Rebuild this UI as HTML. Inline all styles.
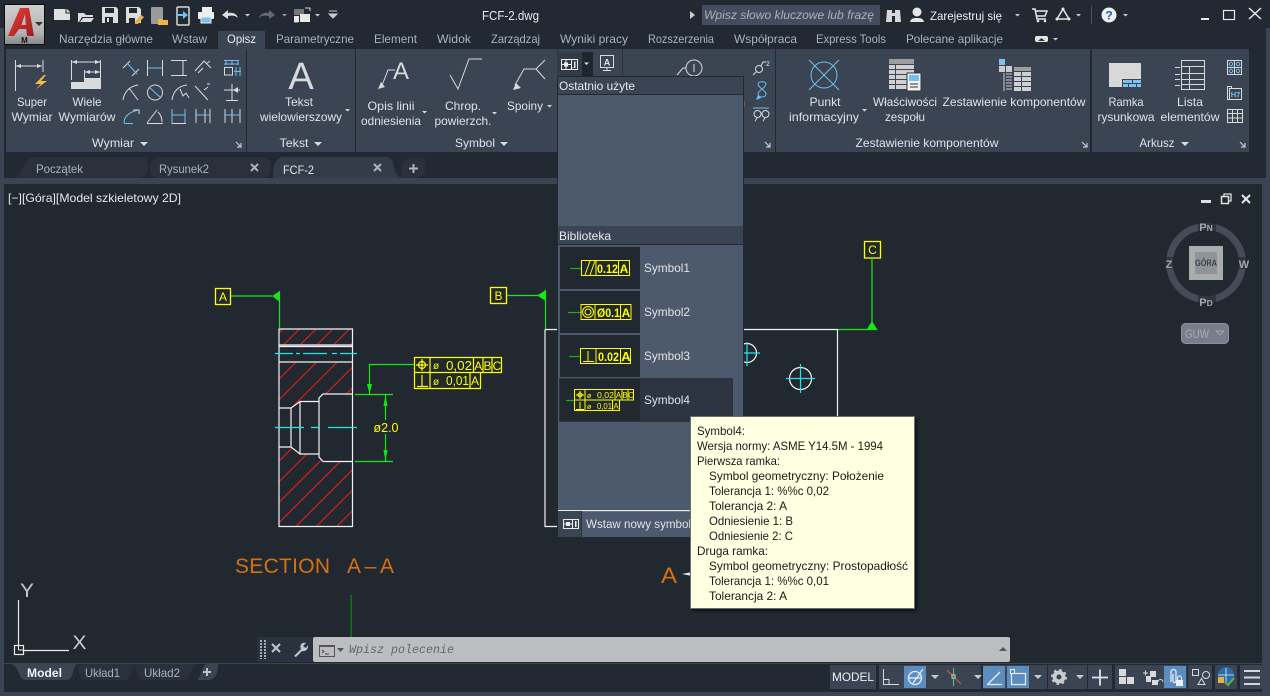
<!DOCTYPE html>
<html lang="pl"><head><meta charset="utf-8"><title>FCF-2.dwg</title>
<style>
html,body{margin:0;padding:0;background:#222933;width:1270px;height:696px;overflow:hidden}
svg{display:block;position:absolute;left:0;top:0}
text{font-family:"Liberation Sans","DejaVu Sans",sans-serif;font-size:12px;fill:#dfe3e8}
.m{text-anchor:middle}
.tab{fill:#a9b2be}
.g{fill:none;stroke:#d8dadc;stroke-width:1}
.b{fill:none;stroke:#6fc0f0;stroke-width:1}
.w{fill:none;stroke:#f4f4f4;stroke-width:1.2}
.gr{fill:none;stroke:#19e619;stroke-width:1.2}
.y{fill:none;stroke:#ffff00;stroke-width:1.2}
.c{fill:none;stroke:#27e3e8;stroke-width:1.2}
.tt{fill:#1a1a1a}
.yt{fill:#ffff00}
.sb{fill:#e4e6e8}
</style></head><body>
<svg width="1270" height="696" viewBox="0 0 1270 696" xmlns="http://www.w3.org/2000/svg">
<defs>
<linearGradient id="lg" x1="0" y1="0" x2="0" y2="1"><stop offset="0" stop-color="#cfcfcf"/><stop offset=".7" stop-color="#b4b4b4"/><stop offset="1" stop-color="#868686"/></linearGradient>
<linearGradient id="ag" x1="0" y1="0" x2="1" y2="1"><stop offset="0" stop-color="#e8403c"/><stop offset="1" stop-color="#9c1c1c"/></linearGradient>
<pattern id="h1" width="14.5" height="14.5" patternUnits="userSpaceOnUse" patternTransform="translate(0.6 0) rotate(45)"><line x1="1" y1="0" x2="1" y2="14.5" stroke="#ee1c1c" stroke-width="1"/></pattern>
<pattern id="h2" width="11.8" height="11.8" patternUnits="userSpaceOnUse" patternTransform="translate(9.6 0) rotate(45)"><line x1="1" y1="0" x2="1" y2="11.8" stroke="#ee1c1c" stroke-width="1"/></pattern>
<filter id="sh" x="-5%" y="-5%" width="112%" height="112%"><feDropShadow dx="2" dy="2" stdDeviation="1.5" flood-color="#000" flood-opacity=".55"/></filter>
</defs>

<!-- base -->
<rect width="1270" height="696" fill="#222933"/>
<rect x="0" y="28" width="4" height="668" fill="#3b4453"/>
<rect x="1266" y="28" width="4" height="668" fill="#3b4453"/>
<rect x="0" y="178" width="1270" height="6" fill="#3b4453"/>
<rect x="1262" y="178" width="8" height="518" fill="#3b4453"/>
<rect x="0" y="692" width="1270" height="4" fill="#3b4453"/>
<rect x="4" y="184" width="1258" height="479" fill="#212830"/>
<rect x="4" y="663" width="1258" height="1" fill="#3b4453"/>

<!-- logo -->
<rect x="4.500" y="4.500" width="40" height="40" fill="url(#lg)" stroke="#0c0c0c"/>
<path d="M8 36 L20 8 L29 8 L34 36 L27 36 L26.200 29 L19 29 L14 36 Z M21.500 25 L25.800 25 L25 14 Z" fill="url(#ag)" fill-rule="evenodd"/>
<path d="M35 22 h8 l-4 4 z" fill="#333"/>
<text x="24.500" y="43" class="m" style="font-size:8px;font-weight:bold;fill:#111">M</text>

<!-- QAT -->
<path d="M54 9 h13 l3 3 v8 h-16 z" fill="#e0e0e0"/><path d="M66 9 v4 h4" fill="none" stroke="#222" />
<path d="M78 13 h6 l2 2 h7 v2 h-11 l-3 5 h-1 z M83 18 h11 l-3 4 h-11 z" fill="#dcdcdc"/>
<path d="M102 7 h14 l2 2 v14 h-16 z" fill="#dcdcdc"/><rect x="105" y="8" width="9" height="5" fill="#222933"/><rect x="105" y="17" width="8" height="6" fill="#222933"/><rect x="107" y="18" width="2" height="4" fill="#ddd"/>
<path d="M126 7 h13 l2 2 v14 h-15 z" fill="#dcdcdc"/><rect x="129" y="8" width="8" height="5" fill="#222933"/><rect x="129" y="18" width="6" height="5" fill="#222933"/><path d="M135 22 l6 -7 l3 2 l-6 7 h-3 z" fill="#e7b04a"/>
<rect x="151" y="7" width="12" height="17" rx="1" fill="#9a9a9a"/><path d="M158 19 h4 l1 1 h5 v5 h-10 z" fill="#eeb73e"/>
<rect x="177" y="7" width="12" height="18" rx="1" fill="none" stroke="#d8d8d8" stroke-width="1.500"/><path d="M176 14 h7 v-3 l5 4 l-5 4 v-3 h-7 z" fill="#6fc0f0"/>
<path d="M202 7 h10 v5 h-10 z" fill="#eee"/><rect x="198" y="12" width="16" height="7" rx="1" fill="#eee"/><rect x="201" y="17" width="10" height="6" fill="#7cc0ef" stroke="#eee"/>
<path d="M222 15 l6 -5 v3 c5 -1 9 1 10 5 c-2 -2 -5 -3 -10 -2 v3 z" fill="#dcdcdc"/><path d="M245 14 h5 l-2.500 2.500 z" fill="#ccc"/>
<path d="M275 15 l-6 -5 v3 c-5 -1 -9 1 -10 5 c2 -2 5 -3 10 -2 v3 z" fill="#636a75"/><path d="M282 14 h5 l-2.500 2.500 z" fill="#999"/>
<rect x="294" y="9" width="10" height="6" fill="#777"/><rect x="300" y="14" width="10" height="8" fill="#e8e8e8"/><rect x="294" y="16" width="5" height="6" fill="#e8e8e8"/><path d="M305 8 h5 v3" class="g"/><path d="M294 22 h4" class="g"/>
<path d="M315 14 h5 l-2.500 2.500 z" fill="#ccc"/>
<path d="M329 11 h8 M329 14 h8 l-4 4 z" stroke="#ccc" fill="#ccc"/>

<text x="482" y="20" textLength="57" lengthAdjust="spacingAndGlyphs" style="font-size:13px;fill:#e8eaed">FCF-2.dwg</text>
<path d="M690 11 l5 4 l-5 4 z" fill="#ccc"/>
<rect x="702" y="5" width="178" height="20" fill="#444d5d"/>
<text x="704" y="19" textLength="170" lengthAdjust="spacingAndGlyphs" style="font-style:italic;fill:#aab0b8">Wpisz słowo kluczowe lub frazę</text>
<path d="M887 10 h5 v12 h-6 z M895 10 h5 l1 12 h-6 z" fill="#d8d8d8"/><rect x="892" y="13" width="3" height="3" fill="#d8d8d8"/>
<circle cx="917" cy="12" r="4.500" fill="#e5e5e5"/><path d="M910 22 c1 -4 4 -4 7 -4 s6 0 7 4 z" fill="#e5e5e5"/>
<text x="930" y="20" textLength="72" lengthAdjust="spacingAndGlyphs" style="fill:#eef0f2">Zarejestruj się</text>
<path d="M1015 14 h5 l-2.500 2.500 z" fill="#ccc"/>
<path d="M1032 9 h3 l2 10 h9 M1036 11 h11 l-2 5 h-8" fill="none" stroke="#e8e8e8" stroke-width="1.500"/><circle cx="1038" cy="21" r="1.300" fill="#e8e8e8"/><circle cx="1045" cy="21" r="1.300" fill="#e8e8e8"/>
<path d="M1063 9 l-6 10 h12 z" fill="none" stroke="#e8e8e8" stroke-width="1.500"/><circle cx="1063" cy="9" r="1.500" fill="#e8e8e8"/><circle cx="1057" cy="19" r="1.500" fill="#e8e8e8"/><circle cx="1069" cy="19" r="1.500" fill="#e8e8e8"/>
<path d="M1076 14 h5 l-2.500 2.500 z" fill="#ccc"/>
<rect x="1091" y="6" width="1" height="18" fill="#4a5260"/>
<circle cx="1109" cy="15" r="7.500" fill="#eef0f2"/><text x="1109" y="19.500" class="m" style="font-weight:bold;font-size:12px;fill:#1f5fb0">?</text>
<path d="M1123 14 h5 l-2.500 2.500 z" fill="#ccc"/>
<rect x="1201" y="18" width="8" height="2" fill="#e8e8e8"/>
<rect x="1223.500" y="10.500" width="11" height="9" fill="none" stroke="#e8e8e8" stroke-width="1.200"/>
<path d="M1249 8 L1261 19 M1261 8 L1249 19" stroke="#e8e8e8" stroke-width="1.500"/>

<!-- ribbon tabs -->
<rect x="218" y="31" width="47" height="18" fill="#3b4453"/>
<text x="59" y="43" class="tab" textLength="94" lengthAdjust="spacingAndGlyphs">Narzędzia główne</text>
<text x="172" y="43" class="tab" textLength="35" lengthAdjust="spacingAndGlyphs">Wstaw</text>
<text x="227" y="43" textLength="29" lengthAdjust="spacingAndGlyphs" style="fill:#e8eaed">Opisz</text>
<text x="276" y="43" class="tab" textLength="78" lengthAdjust="spacingAndGlyphs">Parametryczne</text>
<text x="374" y="43" class="tab" textLength="43" lengthAdjust="spacingAndGlyphs">Element</text>
<text x="437" y="43" class="tab" textLength="34" lengthAdjust="spacingAndGlyphs">Widok</text>
<text x="491" y="43" class="tab" textLength="49" lengthAdjust="spacingAndGlyphs">Zarządzaj</text>
<text x="560" y="43" class="tab" textLength="68" lengthAdjust="spacingAndGlyphs">Wyniki pracy</text>
<text x="648" y="43" class="tab" textLength="66" lengthAdjust="spacingAndGlyphs">Rozszerzenia</text>
<text x="734" y="43" class="tab" textLength="63" lengthAdjust="spacingAndGlyphs">Współpraca</text>
<text x="816" y="43" class="tab" textLength="70" lengthAdjust="spacingAndGlyphs">Express Tools</text>
<text x="906" y="43" class="tab" textLength="97" lengthAdjust="spacingAndGlyphs">Polecane aplikacje</text>
<rect x="1035" y="36" width="13" height="6" rx="2" fill="#e4e4e4"/><path d="M1038 41 l3.500 -3 l3.500 3 z" fill="#333"/><path d="M1053 38 h5 l-2.500 2.500 z" fill="#ccc"/>

<!-- ribbon panels -->
<rect x="6" y="49" width="240" height="103" fill="#3b4453"/>
<rect x="247" y="49" width="108" height="103" fill="#3b4453"/>
<rect x="356" y="49" width="419" height="103" fill="#3b4453"/>
<rect x="776" y="49" width="314" height="103" fill="#3b4453"/>
<rect x="1092" y="49" width="157" height="103" fill="#3b4453"/>

<!-- Super Wymiar -->
<path d="M15.500 60 V91 M43 60 V72 M16 66 H42" class="g"/><path d="M16 66 l5 -2 v4 z M42 66 l-5 -2 v4 z" fill="#d8dadc"/>
<path d="M44 75 l-9 9 h6 l-6 6 l12 -9 h-6 l5 -6 z" fill="#f1bd45"/>
<text x="32" y="106" class="m" textLength="30" lengthAdjust="spacingAndGlyphs">Super</text>
<text x="32" y="121" class="m" textLength="41" lengthAdjust="spacingAndGlyphs">Wymiar</text>
<!-- Wiele -->
<path d="M71.500 60 V80 M100.500 60 V80 M84.500 70 V79 M72 62 H100 M85 72 H100" class="g"/><path d="M72 62 l5 -2 v4 z M100 62 l-5 -2 v4 z M85 72 l5 -2 v4 z M100 72 l-5 -2 v4 z" fill="#d8dadc"/>
<path d="M71 82 h13 v-4 h17 v11 h-30 z" fill="#d8dadc"/>
<text x="87" y="106" class="m" textLength="29" lengthAdjust="spacingAndGlyphs">Wiele</text>
<text x="87" y="121" class="m" textLength="57" lengthAdjust="spacingAndGlyphs">Wymiarów</text>
<!-- grid of dims -->
<path d="M123 68 L130 61 M132 76 L139 69" class="g"/><path d="M127 63 L137 74" class="b"/>
<path d="M147.500 60 V76 M162.500 60 V76" class="g"/><path d="M148 68 H162" class="b"/>
<path d="M171 60.500 H187 M171 75.500 H187 M183 61 V75" class="g"/>
<path d="M195 71 L204 61 L211 68 M198 73 L203 68 M206 64 L210 61" class="g"/>
<path d="M123 100 C124 92 130 86 138 85 M129 88 L138 100" class="g"/>
<circle cx="155" cy="92.500" r="7.500" class="g" stroke-width="1.300"/><path d="M150 88 L160 97" class="b"/>
<path d="M172 100 C173 92 178 86 187 85 M180 89 L183 96 L186 93 L189 98" class="g"/>
<path d="M195 86 L208 100 M207 84 h3 M204 90 l4 -3" class="g"/>
<path d="M224 90 H240 M232 84 V100 M226 100.500 H238" class="g"/><path d="M233 90 l5 -3 v6 z" fill="#d8dadc"/>
<path d="M124 123 C124 116 130 112 138 110 M124 123.500 H133" class="b" stroke-width="1.500"/><path d="M133 110 h6 v4" class="g"/>
<path d="M147 123.500 H163 M147 123 L157 110 M158 112 C161 115 162 119 162 122" class="g"/>
<path d="M172 109 V124 M185 109 V124" class="b"/><path d="M172 115 H185" class="b"/><path d="M172 123.500 H186" class="g"/>
<path d="M196 109 V123 M205 109 V123 M210 109 V123" class="g"/><path d="M196 115 H210" class="b"/>
<path d="M225 109 V123 M232 109 V123 M240 109 V123" class="g"/><path d="M225 115 H240" class="b"/>
<path d="M224 60.500 h15 M224 64 h15 M226 60 v5 M232 60 v5 M238 60 v5" class="b"/><rect x="224.500" y="67.500" width="8" height="7.500" class="g"/><path d="M236 67 v9 M240 67 v9 M234 71.500 h7" class="b"/>
<text x="113" y="147" class="m" textLength="42" lengthAdjust="spacingAndGlyphs">Wymiar</text><path d="M140 142 h8 l-4 4 z" fill="#d8dadc"/>
<path d="M236 142 l5 5 M241 143 v4 h-4" stroke="#c6c9cd" fill="none" stroke-width="1.200"/>
<!-- Tekst -->
<text x="301" y="89" class="m" style="font-size:38px;fill:#d9dadb">A</text>
<text x="299" y="106" class="m" textLength="28" lengthAdjust="spacingAndGlyphs">Tekst</text>
<text x="301" y="121" class="m" textLength="82" lengthAdjust="spacingAndGlyphs">wielowierszowy</text>
<path d="M345 109 h5 l-2.500 2.500 z" fill="#d8dadc"/>
<text x="294" y="147" class="m" textLength="29" lengthAdjust="spacingAndGlyphs">Tekst</text><path d="M314 142 h8 l-4 4 z" fill="#d8dadc"/>
<!-- Symbol panel -->
<path d="M381 88 L388 70 H395" class="g"/><path d="M378 89 l7 -2 l-4 -5 z" fill="#d8dadc"/><text x="401" y="79" class="m" style="font-size:24px;fill:#d9dadb">A</text>
<text x="391" y="110" class="m" textLength="47" lengthAdjust="spacingAndGlyphs">Opis linii</text>
<text x="391" y="125" class="m" textLength="60" lengthAdjust="spacingAndGlyphs">odniesienia</text>
<path d="M422 111 h5 l-2.500 2.500 z" fill="#d8dadc"/>
<path d="M450 75 L458 89 L469 59 H482" class="g" stroke-width="1.200"/>
<text x="463" y="110" class="m" textLength="36" lengthAdjust="spacingAndGlyphs">Chrop.</text>
<text x="463" y="125" class="m" textLength="57" lengthAdjust="spacingAndGlyphs">powierzch.</text>
<path d="M492 112 h5 l-2.500 2.500 z" fill="#d8dadc"/>
<path d="M515 85 L524 69 H536 L545 60 M536 69 L545 79" class="g" stroke-width="1.200"/><path d="M513 90 l8 -2 l-5 -5 z" fill="#d8dadc"/>
<text x="525" y="110" class="m" textLength="36" lengthAdjust="spacingAndGlyphs">Spoiny</text>
<path d="M547 105 h5 l-2.500 2.500 z" fill="#d8dadc"/>
<text x="475" y="147" class="m" textLength="40" lengthAdjust="spacingAndGlyphs">Symbol</text><path d="M500 142 h8 l-4 4 z" fill="#d8dadc"/>
<rect x="557" y="49" width="1" height="103" fill="#2c3340"/>
<rect x="622" y="49" width="1" height="28" fill="#2c3340"/>
<!-- flyout top buttons -->
<rect x="557" y="52" width="25" height="24" fill="#333b49"/><rect x="582" y="52" width="11" height="24" fill="#1f2630"/>
<rect x="561.500" y="59.500" width="16" height="10" fill="none" stroke="#eee"/><path d="M571.500 60 v9 M566 60 v9 M562 64.500 h9" stroke="#eee"/><rect x="564" y="62.500" width="4" height="4" fill="#eee"/><rect x="574" y="61.500" width="1.500" height="6.500" fill="#eee"/><rect x="572.500" y="67" width="1" height="1" fill="#eee"/>
<path d="M584 62.500 h5 l-2.500 2.500 z" fill="#ddd"/>
<rect x="600.500" y="55.500" width="13" height="12" fill="none" stroke="#d8dadc"/><text x="607" y="65.500" class="m" style="font-size:9px;font-weight:bold">A</text><path d="M607 68 v2 M603 70.500 h8" class="g"/>
<path d="M677 75 L683 68 H686" class="g"/><circle cx="694" cy="68" r="8" class="g" stroke-width="1.200"/><path d="M694 64 v8" class="g"/>
<path d="M744 101 v6" stroke="#c0673a"/>
<!-- right small icons -->
<circle cx="759" cy="69" r="3.500" class="g"/><path d="M753 75 L757 71 M761 66 L763 62 H766" class="g"/><text x="766" y="66" style="font-size:7px;font-weight:bold;fill:#6fc0f0">2</text>
<path d="M758 84 C758 81 766 81 766 84 C766 88 758 90 758 94 C758 98 766 98 766 94 C766 90 758 88 758 84 Z" class="b" stroke-width="1.300"/><path d="M756 100 l2 -5 l3 3 z" fill="#6fc0f0"/>
<rect x="753" y="107.500" width="16" height="1" fill="#6fc0f0"/><circle cx="757.500" cy="114" r="3.500" class="g"/><circle cx="765.500" cy="114" r="3.500" class="g"/><path d="M757 118 l-2 3 M765 118 l-2 3" class="g"/>
<path d="M765 142 l5 5 M770 143 v4 h-4" stroke="#c6c9cd" fill="none" stroke-width="1.200"/>
<!-- Punkt info -->
<circle cx="824" cy="75" r="13" class="b" stroke-width="1.300"/><path d="M809 60 L839 90 M839 60 L809 90" class="b" stroke-width="1.300"/>
<text x="825" y="106" class="m" textLength="31" lengthAdjust="spacingAndGlyphs">Punkt</text>
<text x="824" y="121" class="m" textLength="70" lengthAdjust="spacingAndGlyphs">informacyjny</text>
<path d="M862 109 h5 l-2.500 2.500 z" fill="#d8dadc"/>
<!-- Wlasciwosci -->
<rect x="889" y="59" width="25" height="5" fill="#9d9d9d"/><g fill="#d0d0d0"><rect x="889" y="65" width="6" height="4"/><rect x="896" y="65" width="18" height="4"/><rect x="889" y="70" width="6" height="4"/><rect x="896" y="70" width="18" height="4"/><rect x="889" y="75" width="6" height="4"/><rect x="896" y="75" width="12" height="4"/><rect x="889" y="80" width="6" height="4"/><rect x="896" y="80" width="12" height="4"/><rect x="889" y="85" width="6" height="4"/><rect x="896" y="85" width="12" height="4"/></g>
<rect x="907" y="73" width="14" height="18" fill="#f1f1f1" stroke="#333"/><rect x="909" y="75" width="10" height="6" fill="#6fc0f0"/><path d="M910 84 h8 M910 87 h8" stroke="#333"/>
<text x="905" y="106" class="m" textLength="64" lengthAdjust="spacingAndGlyphs">Właściwości</text>
<text x="905" y="121" class="m" textLength="40" lengthAdjust="spacingAndGlyphs">zespołu</text>
<rect x="999" y="59" width="6" height="6" fill="#7cc4f0"/><rect x="999" y="66" width="6" height="6" fill="#ccc"/><rect x="1006" y="66" width="6" height="6" fill="#ccc"/>
<path d="M1004 73 v18 M1006 74 h6 M1006 77 h6 M1006 80 h6 M1006 83 h6 M1006 86 h6 M1006 89 h6" stroke="#ccc"/>
<rect x="1014" y="67" width="17" height="4" fill="#9d9d9d"/><g fill="#d0d0d0"><rect x="1014" y="72" width="7" height="4"/><rect x="1022" y="72" width="9" height="4"/><rect x="1014" y="77" width="7" height="4"/><rect x="1022" y="77" width="9" height="4"/><rect x="1014" y="82" width="7" height="4"/><rect x="1022" y="82" width="9" height="4"/><rect x="1014" y="87" width="7" height="4"/><rect x="1022" y="87" width="9" height="4"/></g>
<text x="1014" y="106" class="m" textLength="143" lengthAdjust="spacingAndGlyphs">Zestawienie komponentów</text>
<text x="927" y="147" class="m" textLength="143" lengthAdjust="spacingAndGlyphs">Zestawienie komponentów</text>
<path d="M1082 142 l5 5 M1087 143 v4 h-4" stroke="#c6c9cd" fill="none" stroke-width="1.200"/>
<!-- Arkusz -->
<rect x="1109" y="63" width="32" height="24" fill="#d8d8d8"/><rect x="1122" y="79" width="20" height="9" fill="#3b4453"/><g fill="#7cc4f0"><rect x="1123" y="80" width="9" height="3"/><rect x="1133" y="80" width="8" height="3"/><rect x="1123" y="84" width="5" height="3"/><rect x="1129" y="84" width="7" height="3"/><rect x="1137" y="84" width="4" height="3"/></g>
<text x="1126" y="106" class="m" textLength="35" lengthAdjust="spacingAndGlyphs">Ramka</text>
<text x="1126" y="121" class="m" textLength="57" lengthAdjust="spacingAndGlyphs">rysunkowa</text>
<rect x="1181.500" y="60.500" width="23" height="29" class="g"/><path d="M1181 66.500 h24 M1181 73.500 h24 M1181 79.500 h24 M1181 84.500 h24 M1189.500 66 v24 M1175 67.500 h5 M1175 74.500 h5 M1175 79.500 h5 M1175 85.500 h5" class="g"/>
<text x="1190" y="106" class="m" textLength="26" lengthAdjust="spacingAndGlyphs">Lista</text>
<text x="1190" y="121" class="m" textLength="59" lengthAdjust="spacingAndGlyphs">elementów</text>
<rect x="1227.500" y="60.500" width="14" height="14" class="g"/><path d="M1228 67.500 h14 M1234.500 61 v13" class="g"/><circle cx="1231" cy="64" r="1.700" class="b"/><circle cx="1238" cy="64" r="1.700" class="b"/><circle cx="1231" cy="71" r="1.700" class="b"/><circle cx="1238" cy="71" r="1.700" class="b"/>
<rect x="1227.500" y="86.500" width="4" height="13" class="g"/><rect x="1229.500" y="88.500" width="12" height="11" fill="#3b4453" stroke="#d8dadc"/><text x="1235.500" y="97" class="m" style="font-size:7.500px;font-weight:bold;fill:#6fc0f0">H7</text>
<rect x="1227.500" y="109.500" width="15" height="13" class="g"/><path d="M1228 113.500 h14 M1228 118 h14 M1232.500 110 v13 M1237.500 110 v13" class="g"/>
<text x="1157" y="147" class="m" textLength="35" lengthAdjust="spacingAndGlyphs">Arkusz</text><path d="M1181 142 h8 l-4 4 z" fill="#d8dadc"/>
<path d="M1240 142 l5 5 M1245 143 v4 h-4" stroke="#c6c9cd" fill="none" stroke-width="1.200"/>

<!-- document tabs -->
<path d="M14 178 C22 178 24 157 34 157 H140 Q148 157 148 165 Q148 178 138 178 Z" fill="#2a313d"/>
<path d="M150 168 Q150 157 160 157 H262 Q271 157 271 165 Q271 178 262 178 H160 Q150 178 150 168 Z" fill="#2a313d"/>
<path d="M273 178 Q273 157 283 157 H385 Q393 157 394 167 Q395 177 404 178 Z" fill="#343c4a"/>
<path d="M402 170 Q402 158 412 158 H425 V168 Q425 178 415 178 H398 Q402 176 402 170 Z" fill="#2a313d"/>
<text x="36" y="173" class="tab" textLength="47" lengthAdjust="spacingAndGlyphs">Początek</text>
<text x="159" y="173" class="tab" textLength="50" lengthAdjust="spacingAndGlyphs">Rysunek2</text>
<text x="283" y="174" textLength="31" lengthAdjust="spacingAndGlyphs" style="fill:#e2e5e9">FCF-2</text>
<path d="M251 164 L258 171 M258 164 L251 171 M374 164 L381 171 M381 164 L374 171" stroke="#aeb3ba" stroke-width="2"/>
<path d="M413.500 164 v9 M409 168.500 h9" stroke="#aeb3ba" stroke-width="2"/>

<!-- viewport label -->
<text x="8" y="202" textLength="173" lengthAdjust="spacingAndGlyphs" style="fill:#e6e8ea">[−][Góra][Model szkieletowy 2D]</text>
<rect x="1201" y="200" width="10" height="3" fill="#e0e0e0"/>
<rect x="1221.500" y="196.500" width="7" height="7" fill="none" stroke="#e0e0e0" stroke-width="1.500"/><path d="M1224 196 v-2 h7 v7 h-2" fill="none" stroke="#e0e0e0" stroke-width="1.300"/>
<path d="M1242 195 L1250 203 M1250 195 L1242 203" stroke="#e8e8e8" stroke-width="2"/>

<!-- drawing left -->
<rect x="279" y="329" width="73.500" height="16" fill="url(#h2)"/>
<rect x="279" y="362" width="73.500" height="164.500" fill="url(#h1)"/>
<path d="M352.500 394 H323 L319 398 V401.500 H300 L290.500 408 H279 V447 H291 L300 454 H319 V457 L323 461.500 H352.500 Z" fill="#212830"/>
<path d="M279 329 H352.500 V526.500 H279 Z" class="w"/>
<path d="M279 345 H352.500 M279 346.500 H352.500 M279 362 H352.500" class="w"/>
<path d="M352.500 394 H323 L319 398 V457 L323 461.500 H352.500" class="w"/>
<path d="M319 401.500 H300 V454 H319 M300 401.500 L291 408 V447 L300 454 M279 408 H291 M279 447 H291" class="w"/>
<path d="M275 353.500 H293 M296 353.500 H300 M303 353.500 H327 M332 353.500 H337 M340 353.500 H357" class="c"/>
<path d="M275 427.500 H304 M311 427.500 H320 M328 427.500 H357" class="c"/>
<rect x="215.500" y="288.500" width="15" height="16" fill="none" stroke="#ffff00" stroke-width="1.300"/><text x="223" y="301" class="m yt">A</text>
<path d="M231 296 H272 M279.500 291 V328" class="gr"/><path d="M272 296 L280 291 V302 Z" fill="#19e619"/>
<path d="M355 394.500 H393 M355 461.500 H393 M385.500 394 V420 M385.500 434 V461 M414 364.500 H369.500 V394" class="gr"/>
<path d="M385.500 395 l-2 11 h4 z M385.500 461 l-2 -11 h4 z" fill="#19e619"/><path d="M369.500 394 l-2.500 -10 h5 z" fill="#19e619"/>
<text x="386" y="432" class="m yt" textLength="25" lengthAdjust="spacingAndGlyphs" style="font-size:12.500px">ø2.0</text>
<path d="M414.500 357.500 H501.500 V372.500 H414.500 Z M414.500 372.500 V388.500 H480.500 V372.500 M430 357.500 V388.500 M473.500 357.500 V372.500 M483 357.500 V372.500 M492 357.500 V372.500 M470 372.500 V388.500" class="y"/>
<circle cx="422" cy="365" r="3.500" class="y" stroke-width="1"/><path d="M416 365 H428 M422 359 V371" class="y" stroke-width="1"/>
<path d="M422 375 V386 M417 386.500 H428" class="y" stroke-width="1"/>
<text x="433" y="369" class="yt" style="font-size:10px">ø</text>
<text x="433" y="385" class="yt" style="font-size:10px">ø</text>
<text x="446" y="370" class="yt" textLength="26" lengthAdjust="spacingAndGlyphs" style="font-size:13px">0,02</text>
<text x="446" y="385" class="yt" textLength="23" lengthAdjust="spacingAndGlyphs" style="font-size:13px">0,01</text>
<text x="478.300" y="370" class="m yt" style="font-size:12px">A</text><text x="487.500" y="370" class="m yt" style="font-size:12px">B</text><text x="497" y="370" class="m yt" style="font-size:12px">C</text><text x="475" y="385" class="m yt" style="font-size:12px">A</text>
<text x="235" y="573" textLength="95" lengthAdjust="spacing" style="font-size:21px;fill:#d4720f">SECTION</text>
<text x="347" y="573" textLength="47" lengthAdjust="spacing" style="font-size:21px;fill:#d4720f">A–A</text>
<rect x="350.500" y="595" width="1.200" height="42" fill="#0c8a0c"/>

<!-- drawing right -->
<rect x="490.500" y="287.500" width="16" height="16" fill="none" stroke="#ffff00" stroke-width="1.300"/><text x="498.500" y="300" class="m yt">B</text>
<path d="M507 295.500 H538 M545.500 290 V329" class="gr"/><path d="M537 295.500 L546 290 V301 Z" fill="#19e619"/>
<rect x="864.500" y="241.500" width="16" height="16.500" fill="none" stroke="#ffff00" stroke-width="1.300"/><text x="872.500" y="254" class="m yt">C</text>
<path d="M872 258 V323 M838 329.500 H877" class="gr"/><path d="M872 321 L866.500 330 H877.500 Z" fill="#19e619"/>
<path d="M545 329.500 H837.500 V420 M545 329.500 V526.500 H560" class="w"/>
<circle cx="747" cy="353" r="9.500" class="w"/><path d="M747 342 V366 M735 353 H760" class="c"/>
<circle cx="800.500" cy="378.500" r="11" class="w"/><path d="M800.500 364 V393 M786 378.500 H815" class="c"/>
<text x="661" y="583" textLength="16" lengthAdjust="spacingAndGlyphs" style="font-size:22px;fill:#d4720f">A</text>
<path d="M682 574 L692 572 V576 Z" fill="#eee"/>

<!-- UCS -->
<path d="M18.500 600 V645 M24 650.500 H69" fill="none" stroke="#eaeaea" stroke-width="1.200"/>
<rect x="14.500" y="645.500" width="9" height="9" fill="none" stroke="#eaeaea" stroke-width="1.200"/>
<path d="M18.500 650 H24 M18.500 645 V650" stroke="#eaeaea"/>
<text x="27" y="597" class="m" textLength="14" lengthAdjust="spacingAndGlyphs" style="font-size:19px;fill:#c8cacc">Y</text>
<text x="79.500" y="649" class="m" textLength="14" lengthAdjust="spacingAndGlyphs" style="font-size:19px;fill:#c8cacc">X</text>

<!-- viewcube -->
<circle cx="1206" cy="263" r="36.500" fill="none" stroke="#454c57" stroke-width="7"/>
<rect x="1189" y="246" width="34" height="34" fill="#a9abad"/><rect x="1195" y="252" width="22" height="22" fill="#8f9498"/>
<text x="1206" y="266" class="m" textLength="22" lengthAdjust="spacingAndGlyphs" style="font-size:9.500px;font-weight:bold;fill:#3f4247">GÓRA</text>
<rect x="1198" y="221" width="18" height="12" fill="#212830" opacity=".6"/><rect x="1198" y="295" width="18" height="12" fill="#212830" opacity=".6"/>
<rect x="1165" y="257" width="10" height="12" fill="#212830" opacity=".6"/><rect x="1237" y="257" width="12" height="12" fill="#212830" opacity=".6"/>
<text x="1206" y="231" class="m" style="font-size:11px;font-weight:bold;fill:#a4a7ab">P<tspan style="font-size:8.500px;fill:#a4a7ab">N</tspan></text>
<text x="1206" y="306" class="m" style="font-size:11px;font-weight:bold;fill:#a4a7ab">P<tspan style="font-size:8.500px;fill:#a4a7ab">D</tspan></text>
<text x="1169" y="268" class="m" style="font-size:11px;font-weight:bold;fill:#a4a7ab">Z</text>
<text x="1244" y="268" class="m" style="font-size:11px;font-weight:bold;fill:#a4a7ab">W</text>
<rect x="1181.500" y="323.500" width="47" height="20" rx="4" fill="#787c8b" stroke="#8d909c"/>
<text x="1185" y="338" textLength="24" lengthAdjust="spacingAndGlyphs" style="fill:#a9acb4">GUW</text><path d="M1216 331 h8 l-4 4 z" fill="none" stroke="#a0a3ad"/>

<!-- flyout -->
<rect x="557.500" y="76.500" width="186" height="461" fill="#4d5a6d" stroke="#222933"/>
<rect x="558" y="77" width="185" height="17" fill="#3b4453"/><rect x="558" y="94" width="185" height="1" fill="#222933"/>
<text x="559" y="90" textLength="76" lengthAdjust="spacingAndGlyphs" style="fill:#e8eaed">Ostatnio użyte</text>
<rect x="558" y="226" width="185" height="18" fill="#3b4453"/><rect x="558" y="244" width="185" height="1" fill="#222933"/>
<text x="559" y="240" textLength="52" lengthAdjust="spacingAndGlyphs" style="fill:#e8eaed">Biblioteka</text>
<rect x="560" y="247" width="80" height="42" fill="#212830"/><rect x="560" y="291" width="80" height="42" fill="#212830"/><rect x="560" y="335" width="80" height="42" fill="#212830"/>
<rect x="559" y="378" width="174" height="44" fill="#2e3542"/><rect x="560" y="379" width="80" height="42" fill="#212830"/>
<text x="644" y="272" textLength="46" lengthAdjust="spacingAndGlyphs" style="fill:#dfe3e8">Symbol1</text>
<text x="644" y="316" textLength="46" lengthAdjust="spacingAndGlyphs" style="fill:#dfe3e8">Symbol2</text>
<text x="644" y="360" textLength="46" lengthAdjust="spacingAndGlyphs" style="fill:#dfe3e8">Symbol3</text>
<text x="644" y="404" textLength="46" lengthAdjust="spacingAndGlyphs" style="fill:#dfe3e8">Symbol4</text>
<!-- symbol thumbs -->
<path d="M570 268.500 H581.500" stroke="#11b811" stroke-width="1.200"/><path d="M581.500 260.500 H629.500 V275.500 H581.500 Z M596 260.500 V275.500 M618.500 260.500 V275.500" fill="none" stroke="#ffff00"/><path d="M585 275 L590 261 M590 275 L595 261" stroke="#ffff00"/>
<text x="597" y="273" textLength="21" lengthAdjust="spacingAndGlyphs" style="font-weight:bold;fill:#ffff00">0.12</text><text x="624" y="273" class="m" style="font-weight:bold;fill:#ffff00">A</text>
<path d="M568 312.500 H581" stroke="#11b811" stroke-width="1.200"/><path d="M581 304.500 H631 V319.500 H581 Z M595 304.500 V319.500 M620.500 304.500 V319.500" fill="none" stroke="#ffff00"/><circle cx="588" cy="312" r="5.500" fill="none" stroke="#ffff00"/><circle cx="588" cy="312" r="3" fill="none" stroke="#ffff00"/>
<text x="597" y="317" textLength="23" lengthAdjust="spacingAndGlyphs" style="font-weight:bold;fill:#ffff00">Ø0.1</text><text x="626" y="317" class="m" style="font-weight:bold;fill:#ffff00">A</text>
<path d="M569 356.500 H580" stroke="#11b811" stroke-width="1.200"/><path d="M580.500 348.500 H630.500 V363.500 H580.500 Z M596 348.500 V363.500 M620.500 348.500 V363.500 M588 351 V361 M583 361.500 H594" fill="none" stroke="#ffff00"/>
<text x="598" y="361" textLength="21" lengthAdjust="spacingAndGlyphs" style="font-weight:bold;fill:#ffff00">0.02</text><text x="626" y="361" class="m" style="font-size:13px;font-weight:bold;fill:#ffff00">A</text>
<path d="M566 400.500 H574" stroke="#11b811" stroke-width="1.200"/><path d="M574.500 389.500 H633.500 V400 H574.500 Z M574.500 400 V410.500 H619.500 V400 M585 389.500 V410.500 M615 389.500 V400 M622 389.500 V400 M628 389.500 V400 M612.500 400 V410.500" fill="none" stroke="#ffff00"/>
<path d="M576 395 H584 M580 391 V399 M580 402 V409 M576 409.500 H584" stroke="#ffff00"/><circle cx="580" cy="395" r="2" fill="none" stroke="#ffff00"/>
<text x="587" y="398" style="font-size:7px;fill:#ffff00">ø</text><text x="597" y="398" textLength="17" lengthAdjust="spacingAndGlyphs" style="font-size:8.500px;fill:#ffff00">0,02</text>
<text x="587" y="409" style="font-size:7px;fill:#ffff00">ø</text><text x="597" y="409" textLength="15" lengthAdjust="spacingAndGlyphs" style="font-size:8.500px;fill:#ffff00">0,01</text>
<text x="618.500" y="398" class="m" style="font-size:8px;fill:#ffff00">A</text><text x="625" y="398" class="m" style="font-size:8px;fill:#ffff00">B</text><text x="631" y="398" class="m" style="font-size:8px;fill:#ffff00">C</text><text x="616" y="409" class="m" style="font-size:8px;fill:#ffff00">A</text>
<!-- flyout footer -->
<rect x="558" y="510" width="186" height="1.200" fill="#e8e8e8"/>
<rect x="558" y="511" width="23" height="26" fill="#3b4453"/><rect x="581" y="511" width="1" height="26" fill="#2c3340"/>
<rect x="563.500" y="519.500" width="15" height="9" fill="none" stroke="#eee"/><path d="M572.500 520 v8 M564 524 h8" stroke="#eee"/><rect x="566" y="522" width="4" height="4" fill="#eee"/><rect x="575" y="521" width="1.500" height="6" fill="#eee"/>
<text x="586" y="528" textLength="105" lengthAdjust="spacingAndGlyphs" style="fill:#dfe3e8">Wstaw nowy symbol</text>

<!-- tooltip -->
<rect x="690.500" y="416.500" width="224" height="192" fill="#ffffe1" stroke="#6e6e6e" filter="url(#sh)"/>
<text class="tt" x="697" y="435" textLength="48" lengthAdjust="spacingAndGlyphs">Symbol4:</text>
<text class="tt" x="697" y="450" textLength="186" lengthAdjust="spacingAndGlyphs">Wersja normy: ASME Y14.5M - 1994</text>
<text class="tt" x="697" y="465" textLength="83" lengthAdjust="spacingAndGlyphs">Pierwsza ramka:</text>
<text class="tt" x="709" y="480" textLength="175" lengthAdjust="spacingAndGlyphs">Symbol geometryczny: Położenie</text>
<text class="tt" x="709" y="495" textLength="120" lengthAdjust="spacingAndGlyphs">Tolerancja 1: %%c 0,02</text>
<text class="tt" x="709" y="510" textLength="78" lengthAdjust="spacingAndGlyphs">Tolerancja 2: A</text>
<text class="tt" x="709" y="525" textLength="84" lengthAdjust="spacingAndGlyphs">Odniesienie 1: B</text>
<text class="tt" x="709" y="540" textLength="84" lengthAdjust="spacingAndGlyphs">Odniesienie 2: C</text>
<text class="tt" x="697" y="555" textLength="71" lengthAdjust="spacingAndGlyphs">Druga ramka:</text>
<text class="tt" x="709" y="570" textLength="199" lengthAdjust="spacingAndGlyphs">Symbol geometryczny: Prostopadłość</text>
<text class="tt" x="709" y="585" textLength="120" lengthAdjust="spacingAndGlyphs">Tolerancja 1: %%c 0,01</text>
<text class="tt" x="709" y="600" textLength="78" lengthAdjust="spacingAndGlyphs">Tolerancja 2: A</text>

<!-- command line -->
<rect x="257" y="637" width="56" height="25" fill="#2a3240"/>
<path d="M261 640 v19 M265 640 v19" stroke="#a8adb4" stroke-width="2" stroke-dasharray="2 1"/>
<path d="M272 644 L280 652 M280 644 L272 652" stroke="#c4c7cb" stroke-width="2"/>
<path d="M294 656 L301 649 C299 645 302 642 306 643 L303 646 L306 648 L308 645 C309 649 305 652 302 651 L296 657 Z" fill="#c4c7cb"/>
<rect x="313" y="637" width="697" height="25" rx="2" fill="#bcbdbf"/>
<rect x="319.500" y="645.500" width="15" height="11" fill="none" stroke="#555"/><rect x="320" y="645" width="15" height="2" fill="#555"/><path d="M322 650 l2 1.500 l-2 1.500 M325 654 h4" stroke="#444" fill="none"/>
<path d="M337 648 h7 l-3.500 4 z" fill="#555"/>
<text x="349" y="653" textLength="105" lengthAdjust="spacingAndGlyphs" style="font-family:'Liberation Mono',monospace;font-style:italic;fill:#666">Wpisz polecenie</text>
<path d="M999 651 h8 l-4 -4 z" fill="#555"/>

<!-- layout tabs -->
<path d="M12 664 H77 C72 668 74 680 66 680 H26 C18 680 20 668 12 664 Z" fill="#3b4453"/>
<path d="M76 666 C80 668 78 680 84 680 H126 C130 680 132 668 135 664 H82 Z" fill="#2a313d"/>
<path d="M133 664 H196 C190 668 190 680 184 680 H143 C138 680 138 668 133 664 Z" fill="#2a313d"/>
<path d="M196 680 C202 680 200 664 208 664 H218 C218 672 216 680 208 680 Z" fill="#3b4453"/>
<text x="27" y="677" textLength="35" lengthAdjust="spacingAndGlyphs" style="font-weight:bold;fill:#f2f3f4">Model</text>
<text x="85" y="677" textLength="35" lengthAdjust="spacingAndGlyphs" class="tab">Układ1</text>
<text x="144" y="677" textLength="36" lengthAdjust="spacingAndGlyphs" class="tab">Układ2</text>
<path d="M207 668 v8 M203 672 h8" stroke="#bfc3c9" stroke-width="2"/>

<!-- status bar -->
<g fill="#3b4453">
<rect x="830" y="665" width="46" height="24"/><rect x="879" y="665" width="102" height="24"/><rect x="983" y="665" width="64" height="24"/><rect x="1048" y="665" width="39" height="24"/><rect x="1088" y="665" width="24" height="24"/><rect x="1115" y="665" width="72" height="24"/><rect x="1188" y="665" width="24" height="24"/><rect x="1215" y="665" width="22" height="24"/><rect x="1240" y="665" width="25" height="24"/>
</g>
<g fill="#5b8dbf"><rect x="904" y="666" width="22" height="22"/><rect x="983" y="666" width="22" height="22"/><rect x="1007" y="666" width="22" height="22"/><rect x="1164" y="666" width="22" height="22"/></g>
<text x="832" y="681" textLength="42" lengthAdjust="spacingAndGlyphs" style="font-size:12px;fill:#eef0f2">MODEL</text>
<path d="M883.500 669 V684.500 H899 M883.500 679.500 H889 V684" class="g" stroke-width="1.200"/>
<circle cx="915" cy="678" r="6.500" fill="none" stroke="#eef" stroke-width="1.300"/><path d="M908 678 H922 M913 683 L923 669" stroke="#eef" stroke-width="1.200"/>
<path d="M931 675 h8 l-4 4 z M974 675 h8 l-4 4 z M1034 675 h8 l-4 4 z M1076 675 h8 l-4 4 z" fill="#c6c9cd"/>
<path d="M947 670 L961 684" stroke="#d0584e" stroke-width="1.200"/><path d="M953.500 668 V686" stroke="#55b96a" stroke-width="1.200"/><rect x="952" y="675" width="3" height="3" fill="#3b4453" stroke="#ddd"/>
<path d="M987 684.500 H1002 M988 684 L1000 672" stroke="#eef" stroke-width="1.300"/>
<rect x="1011.500" y="673.500" width="14" height="11" fill="none" stroke="#eef" stroke-width="1.200"/><rect x="1010.500" y="669.500" width="4" height="4" fill="#5b8dbf" stroke="#eef"/>
<circle cx="1059" cy="677" r="4.500" fill="none" stroke="#c9cbcf" stroke-width="4"/><circle cx="1059" cy="677" r="7" fill="none" stroke="#c9cbcf" stroke-width="2" stroke-dasharray="2.500 3"/>
<path d="M1092 677.500 H1108 M1100 669.500 V685.500" stroke="#e0e2e4" stroke-width="1.800"/>
<g fill="#d8dadc"><rect x="1119" y="669" width="7" height="7"/><rect x="1119" y="677" width="7" height="7"/><rect x="1127" y="677" width="7" height="7"/></g>
<path d="M1143 673 h5 M1145.500 670.500 v5" stroke="#ddd"/><rect x="1146" y="676" width="5" height="6" fill="#d8dadc"/><rect x="1150" y="671" width="6" height="6" fill="#d8dadc"/><rect x="1152" y="680" width="6" height="5" fill="#d8dadc"/><path d="M1158 682 a2.500 2.500 0 0 1 5 0" class="g"/>
<path d="M1171 682 V672 a2.500 2.500 0 0 1 5 0 V681 a1.500 1.500 0 0 1 -3 0 V674" fill="none" stroke="#eef" stroke-width="1.200"/><rect x="1176" y="680" width="7" height="6" fill="#eef"/><path d="M1177.500 680 v-2 a2 2 0 0 1 4 0 v2" fill="none" stroke="#eef"/>
<rect x="1192.500" y="669.500" width="6" height="6" class="g"/><circle cx="1206" cy="675" r="3.500" class="g"/><path d="M1198 684.500 l3.500 -6 l3.500 6 z" class="g"/>
<circle cx="1226" cy="675" r="8" fill="#2f6aa8"/><path d="M1218 675 h16 M1226 668 v14" stroke="#cfe" stroke-width=".8"/><rect x="1218" y="677" width="6" height="6" fill="#e5b23c"/><path d="M1225 682 l3 3 l6 -7" fill="none" stroke="#5fb25a" stroke-width="2"/>
<path d="M1244 671 H1260 M1244 677.500 H1260 M1244 684 H1260" stroke="#d4d6d9" stroke-width="2"/>
</svg>
</body></html>
